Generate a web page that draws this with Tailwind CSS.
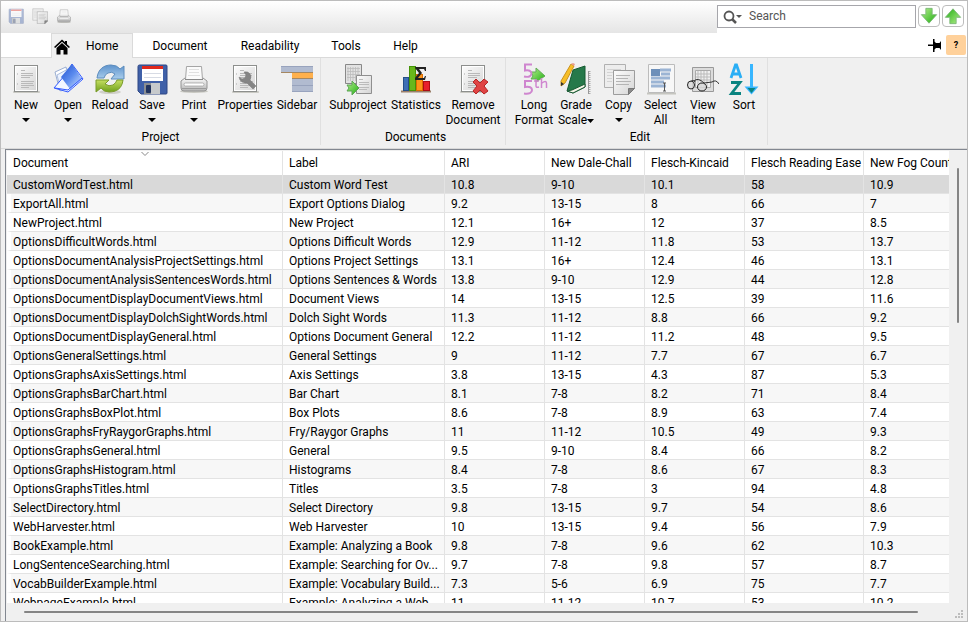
<!DOCTYPE html>
<html lang="en">
<head>
<meta charset="utf-8">
<title>Project</title>
<script src="https://cdn.jsdelivr.net/npm/@tailwindcss/browser@4"></script>
</head>
<body class="font-[Roboto,'Open_Sans',sans-serif] text-[12px] leading-[15px] text-black">
<svg class="absolute size-0" aria-hidden="true">
  <defs>
    <linearGradient id="gPage" x1="0" y1="0" x2="1" y2="1"><stop offset="0" stop-color="#fdfdfd"/><stop offset="1" stop-color="#d4d4d4"/></linearGradient>
    <linearGradient id="gBlue" x1="0" y1="0" x2="1" y2="1"><stop offset="0" stop-color="#1f4fd0"/><stop offset=".5" stop-color="#5c8cee"/><stop offset="1" stop-color="#d8e8ff"/></linearGradient>
    <linearGradient id="gGreen" x1="0" y1="0" x2="1" y2="1"><stop offset="0" stop-color="#b5ee8c"/><stop offset="1" stop-color="#1fae12"/></linearGradient>
    <linearGradient id="gPrint" x1="0" y1="0" x2="0" y2="1"><stop offset="0" stop-color="#fafafa"/><stop offset="1" stop-color="#b4b4b4"/></linearGradient>
    <linearGradient id="gSky" x1="0" y1="0" x2="0" y2="1"><stop offset="0" stop-color="#5e93cc"/><stop offset="1" stop-color="#a9cdec"/></linearGradient>
    <linearGradient id="gLime" x1="0" y1="0" x2="0" y2="1"><stop offset="0" stop-color="#c6df62"/><stop offset="1" stop-color="#6fa01c"/></linearGradient>
    <symbol id="page" viewBox="0 0 32 32">
      <rect x="3" y="28" width="27" height="2" rx="1" fill="#c9c9c3"/>
      <rect x="4.500" y="2.500" width="23" height="26" fill="url(#gPage)" stroke="#8d8f8d"/>
      <rect x="5.500" y="3.500" width="21" height="24" fill="none" stroke="#fff"/>
      <path d="M11 7.500h4M11 10.500h12M11 12.500h12M11 14.500h9M11 18.500h13M11 20.500h12M11 22.500h13M11 24.500h8" stroke="#b9b9b9"/>
      <path d="M7 11h1M7 21h1" stroke="#aaa"/>
    </symbol>
    <symbol id="floppy" viewBox="0 0 32 32">
      <path d="M2 3.500Q2 2 3.500 2H30q1 0 1 1v27q0 1-1 1H5l-3-3z" fill="#3f60a8" stroke="#2e4784"/>
      <rect x="6" y="3" width="21" height="15" fill="#fff"/>
      <rect x="6" y="3" width="21" height="3" fill="#e0281c"/>
      <path d="M8 10.500h17M8 14.500h17" stroke="#d7dbe4"/>
      <rect x="8" y="20" width="16" height="11" fill="#8b8e91"/>
      <rect x="15" y="20" width="9" height="11" fill="#c7cacc"/>
      <rect x="10" y="22" width="5" height="8" rx="1" fill="#22345f"/>
    </symbol>
    <symbol id="printer" viewBox="0 0 32 32">
      <ellipse cx="16" cy="28.500" rx="14" ry="1.500" fill="#c8c8c2"/>
      <path d="M7 15h18l4 3v7q0 3-3 3H6q-3 0-3-3v-7z" fill="url(#gPrint)" stroke="#949494"/>
      <path d="M8.500 3.500h15l1 13h-17z" fill="#fbfbfb" stroke="#a5a5a5"/>
      <path d="M11 6.500h10M11 9.500h10M10 12.500h12" stroke="#e0e0e0"/>
      <path d="M7 16.500h18" stroke="#888"/>
      <rect x="6" y="20" width="20" height="3" rx="1.500" fill="#fff" stroke="#999" stroke-width=".7"/>
      <path d="M4 25.500h24" stroke="#9b9b9b"/>
    </symbol>
    <symbol id="pages" viewBox="0 0 32 32">
      <path d="M1.500 1.500h21v23h-21z" fill="#ededed" stroke="#b0b0b0"/>
      <path d="M4 6.500h14M4 9.500h14M4 12.500h5M4 15.500h5M4 18.500h5" stroke="#d3d3d3"/>
      <path d="M10.500 7.500h21v18l-6 6h-15z" fill="url(#gPage)" stroke="#9c9c9c"/>
      <path d="M13 12.500h14M13 15.500h12M13 18.500h15M13 21.500h13" stroke="#b4b4b4"/>
      <path d="M25.500 31.500v-6h6z" fill="#8a8a8a" stroke="#777"/>
    </symbol>
    <symbol id="arrow" viewBox="0 0 20 20"><path d="M6.500 1.500h7v7h5L10 18 1.500 8.500h5z" fill="url(#gGreen)" stroke="#7ab877"/></symbol>
  </defs>
</svg>
<div class="flex h-screen flex-col overflow-hidden border border-[#bcbcbc] bg-[#f0f0f0]">
  <header class="flex h-8 shrink-0 bg-white">
    <div class="flex flex-1 items-start gap-2 bg-linear-to-b from-white to-[#e5e5e5] px-[7px] pt-[7px]">
      <button aria-label="Save" class="size-4 opacity-40"><svg class="size-4"><use href="#floppy"/></svg></button>
      <button aria-label="Copy" class="size-4"><svg class="size-4"><use href="#pages"/></svg></button>
      <button aria-label="Print" class="size-4"><svg class="size-4"><use href="#printer"/></svg></button>
    </div>
    <div class="flex items-start gap-[2px] pt-1 pr-[3px]">
      <label class="flex h-[23px] w-[199px] items-center border border-[#a6a6ab] pl-[5px]">
        <svg class="h-4 w-5 shrink-0" viewBox="0 0 20 16"><circle cx="6" cy="7" r="4.500" fill="none" stroke="#555" stroke-width="1.800"/><path d="M9 10l4 4" stroke="#555" stroke-width="2.500"/><path d="M13 6h6l-3 3z" fill="#555"/></svg>
        <input type="text" aria-label="Search" placeholder="Search" class="ml-[6px] w-0 flex-1 outline-none placeholder:text-[#555]">
      </label>
      <button aria-label="Find next" class="flex size-[22px] items-center justify-center rounded-[4px] border border-[#bdbdbd] bg-white"><svg class="size-[18px]"><use href="#arrow"/></svg></button>
      <button aria-label="Find previous" class="flex size-[22px] items-center justify-center rounded-[4px] border border-[#bdbdbd] bg-white"><svg class="size-[18px] rotate-180"><use href="#arrow"/></svg></button>
    </div>
  </header>

  <nav class="flex h-[25px] shrink-0 items-stretch border-b border-[#dadada] bg-white pl-[50px]">
    <a href="#home" class="-mb-px flex w-[82px] items-center border border-b-0 border-[#dadada] bg-[#f0f0f0] pt-px pl-[2px]">
      <svg class="size-4" viewBox="0 0 16 16"><path d="M0 8L8 .5 11 3.300V2h2v3.200L16 8l-1.200 1.100L8 2.800 1.200 9.100zM2.500 9L8 4l5.500 5v6.500h-4V11h-3v4.500h-4z" fill="#000"/></svg>
      <span class="ml-4">Home</span>
    </a>
    <a href="#document" class="flex w-[94px] items-center justify-center pt-[2px]">Document</a>
    <a href="#readability" class="flex w-[86px] items-center justify-center pt-[2px]">Readability</a>
    <a href="#tools" class="flex w-[66px] items-center justify-center pt-[2px]">Tools</a>
    <a href="#help" class="flex w-[53px] items-center justify-center pt-[2px]">Help</a>
    <span class="flex-1"></span>
    <button aria-label="Pin ribbon" class="mr-1 w-[14px]"><svg class="h-[14px] w-[14px]" viewBox="0 0 14 14"><path d="M0 6.500h5V1h1.500v2.500L8 5h3.500L13 3v9l-1.500-2H8l-1.500 1.500V14H5V8H0z" fill="#000"/></svg></button>
    <button aria-label="Help" class="mt-[2px] mr-[1px] h-[20px] w-[20px] rounded-[2px] bg-[#ffd19b] text-[9px] font-bold">?</button>
  </nav>

  <section aria-label="Ribbon" class="flex h-[91px] shrink-0 border-b border-[#d9d9d9] pb-[3px] text-center">
    <div class="flex w-[320px] flex-col border-r border-[#e0e0e0] pt-[5px]">
      <div class="flex flex-1 items-start pl-1">
        <button class="flex w-[42px] flex-col items-center"><svg class="mb-[3px] size-8"><use href="#page"/></svg>New<svg class="mt-1 h-[6px] w-2" viewBox="0 0 8 6"><path d="M0 1h8L4 5z"/></svg></button>
        <button class="flex w-[42px] flex-col items-center"><svg class="mb-[3px] size-8" viewBox="0 0 32 32"><path d="M3 9L14 4l4 18-10 6z" fill="#fff" stroke="#9aaed2"/><path d="M5 12L16 6l3 16-10 6z" fill="#eef4ff" stroke="#a9bbdc"/><path d="M20 1l11 15-15 13L2 25 13 12z" fill="#f2f7ff" stroke="#3159ff"/><path d="M20 1l10 15-12 10-9-12z" fill="url(#gBlue)"/><path d="M3 25l13 2 14-12" fill="none" stroke="#3159ff"/></svg>Open<svg class="mt-1 h-[6px] w-2" viewBox="0 0 8 6"><path d="M0 1h8L4 5z"/></svg></button>
        <button class="flex w-[42px] flex-col items-center"><svg class="mb-[3px] size-8" viewBox="0 0 32 32"><ellipse cx="16" cy="29" rx="11" ry="2" fill="#d0d0ca"/><path d="M3 15C4 6 10 2 17 2q6 0 9 4l4-3v13H17l4-5q-3-3-7-1-3 1-4 5z" fill="url(#gSky)" stroke="#5c8cbd"/><path d="M29 17c-1 9-7 12-14 12q-5 0-8-4l-5 4V17h13l-4 4q4 3 8 1 3-2 4-5z" fill="url(#gLime)" stroke="#7b9c2b"/></svg>Reload</button>
        <button class="flex w-[42px] flex-col items-center"><svg class="mb-[3px] size-8"><use href="#floppy"/></svg>Save<svg class="mt-1 h-[6px] w-2" viewBox="0 0 8 6"><path d="M0 1h8L4 5z"/></svg></button>
        <button class="flex w-[42px] flex-col items-center"><svg class="mb-[3px] size-8"><use href="#printer"/></svg>Print<svg class="mt-1 h-[6px] w-2" viewBox="0 0 8 6"><path d="M0 1h8L4 5z"/></svg></button>
        <button class="flex w-[60px] flex-col items-center"><svg class="mb-[3px] size-8" viewBox="0 0 32 32"><use href="#page"/><path d="M15 9q4-1 6 2 2 3 0 6l6 6-3 3-6-6q-4 1-7-3l-1-3 3 2 3-1 1-3z" fill="#858585" stroke="#777" stroke-width=".5"/></svg>Properties</button>
        <button class="flex w-[44px] flex-col items-center"><svg class="mb-[3px] size-8" viewBox="0 0 32 32"><path d="M0 3h32v7H0zM11 16h21v6H11zM11 23h21v6H11z" fill="#b1bbd0"/><path d="M11 10h21v6H11z" fill="#ffb04c"/><path d="M0 3.500h32M11 22.500h21M11 28.500h21" stroke="#98a3bd"/><path d="M0 9.500h32M11 15.500h21" stroke="#a58761"/></svg>Sidebar</button>
      </div>
      <div>Project</div>
    </div>
    <div class="flex w-[185px] flex-col border-r border-[#e0e0e0] pt-[5px] pl-[5px]">
      <div class="flex flex-1 items-start">
        <button class="flex w-[64px] flex-col items-center"><svg class="mb-[3px] size-8" viewBox="0 0 32 32"><path d="M3.500 1.500h16v19h-16z" fill="#e2e2e2" stroke="#888"/><path d="M6 4v14M8.500 4v14M11 4v14M13.500 4v14M16 4v14M5 5.500h13M5 8.500h13M5 11.500h13M5 14.500h13" stroke="#bbb" stroke-width=".8"/><path d="M14.500 12.500h15v18h-15z" fill="url(#gPage)" stroke="#8f8f8f"/><path d="M17 16.500h4M17 19.500h10M17 21.500h10M17 24.500h10M17 26.500h8" stroke="#bbb"/><path d="M5 22h5v-4l7 7-7 7v-4H5l2-3z" fill="url(#gGreen)" stroke="#5ca554"/></svg>Subproject</button>
        <button class="flex w-[52px] flex-col items-center"><svg class="mb-[3px] size-8" viewBox="0 0 32 32"><path d="M1 28.500h30" stroke="#9b806b" stroke-width="2"/><rect x="3.500" y="14.500" width="5" height="13" fill="#3e6fb5" stroke="#254e88"/><rect x="9.500" y="3.500" width="6" height="24" fill="#69b81c" stroke="#459308"/><rect x="16.500" y="11.500" width="6" height="16" fill="#ff941a" stroke="#d96c00"/><rect x="23.500" y="18.500" width="6" height="9" fill="#e8202c" stroke="#ad0c15"/><path d="M15 4h11v4h-1l-1-2h-5l3 4-4 5h6l1-2h1l-1 4H15v-2l4-5-4-5z" fill="#222"/></svg>Statistics</button>
        <button class="flex w-[62px] flex-col items-center"><svg class="mb-[3px] size-8" viewBox="0 0 32 32"><use href="#page"/><path d="M16 19l3-3 4 4 4-4 4 3-4 4 4 5-4 3-4-4-4 4-3-3 4-5z" fill="#df4444" stroke="#b52525"/></svg>Remove<br>Document</button>
      </div>
      <div>Documents</div>
    </div>
    <div class="flex w-[262px] flex-col border-r border-[#e0e0e0] pt-[5px] pl-[7px]">
      <div class="flex flex-1 items-start">
        <button class="flex w-[42px] flex-col items-center"><svg class="mb-[3px] size-8" viewBox="0 0 32 32"><path d="M13 9h5V5l9 8-9 6v-3h-5l2-3z" fill="url(#gGreen)" stroke="#62aa57"/><g fill="none" stroke="#cf86cf" stroke-width="2"><path d="M14 1.500H7v6q6-1 6.500 3Q13 15 6 13.500"/><path d="M14 18H7v6q7-1 7 3 0 4.500-8 3.500"/></g><path d="M18 16v7q0 2 3 1M16 18h5M23.500 15v10M24 20q4-3 4.500 0v5" fill="none" stroke="#cf86cf" stroke-width="1.500"/></svg>Long<br>Format</button>
        <button class="flex w-[42px] flex-col items-center"><svg class="mb-[3px] size-8" viewBox="0 0 32 32"><path d="M13 7l12-4v21l-12 6-6-2z" fill="#26794a" stroke="#155b30"/><path d="M7 28l5-1 13-6v3l-12 6z" fill="#f6f6e8" stroke="#195a34"/><path d="M29.500 8v23" stroke="#aaa" stroke-width="2" stroke-dasharray="1 1"/><path d="M28.500 8v23" stroke="#999"/><path d="M11 1l3 2L5 20l-4 3v-5z" fill="#f7be27" stroke="#c99320"/><path d="M11 1l3 2 1-2-2-1z" fill="#e99b8b"/><path d="M1 19v4l3-2z" fill="#333"/></svg>Grade<span class="flex items-center">Scale<svg class="h-[6px] w-[7px]" viewBox="0 0 7 6"><path d="M0 1h7L3.500 5z"/></svg></span></button>
        <button class="flex w-[43px] flex-col items-center"><svg class="mb-[3px] size-8"><use href="#pages"/></svg>Copy<svg class="mt-1 h-[6px] w-2" viewBox="0 0 8 6"><path d="M0 1h8L4 5z"/></svg></button>
        <button class="flex w-[41px] flex-col items-center"><svg class="mb-[3px] size-8" viewBox="0 0 32 32"><path d="M2 30.500h29" stroke="#c5c5bf" stroke-width="2"/><path d="M3.500 1.500h26v28h-26z" fill="#f7f7f7" stroke="#bcbcbc"/><path d="M6 6h9v7H6z" fill="#6d8fb9"/><path d="M15 7h11M16 11h9M6 15h19M6 19h13M6 23h15" stroke="#9bb4d4" stroke-width="3"/><path d="M18 20h3M19.500 20v8M18 28h3" stroke="#555"/></svg>Select<br>All</button>
        <button class="flex w-[44px] flex-col items-center"><svg class="mb-[3px] size-8" viewBox="0 0 32 32"><path d="M5.500 4.500h21v24h-21z" fill="#dcdcdc" stroke="#999"/><path d="M8.500 7.500h15v17h-15z" fill="#f0f0f0" stroke="#aaa"/><path d="M11 8v16M14 8v16M17 8v16M20 8v16M9 11h14M9 14h14M9 17h14" stroke="#bbb"/><path d="M7 18Q11 14 17 20l8-1q4-3 7 2M3 19q4-3 5 0" fill="none" stroke="#333"/><ellipse cx="4" cy="22" rx="3.500" ry="4" fill="#d9d9d9" fill-opacity=".8" stroke="#222"/><ellipse cx="15" cy="24" rx="4.500" ry="4" fill="#d9d9d9" fill-opacity=".8" stroke="#222"/></svg>View<br>Item</button>
        <button class="flex w-[38px] flex-col items-center"><svg class="mb-[3px] size-8" viewBox="0 0 32 32"><path d="M3 15L7.500 2h1L13 15M4.500 11h7" fill="none" stroke="#29aef5" stroke-width="2.800"/><path d="M3 19.500h9L3.500 30.500H13" fill="none" stroke="#0a8480" stroke-width="2.800"/><path d="M23.500 1v24" stroke="#38b6ff" stroke-width="3"/><path d="M16.500 23.500h14l-7 8z" fill="#38b6ff"/><path d="M19.500 25h8l-4 5z" fill="#0a8480"/></svg>Sort</button>
      </div>
      <div>Edit</div>
    </div>
  </section>

  <main class="ml-1 flex min-h-0 flex-1 flex-col border-t border-l border-[#828790] pt-px pl-px">
    <div class="flex min-h-0 flex-1">
      <div class="relative min-w-0 flex-1 overflow-hidden bg-white">
        <svg class="absolute top-0 left-[134px] h-[6px] w-2" viewBox="0 0 8 6" fill="none" stroke="#888"><path d="M0.500 1L4 4.500 7.500 1"/></svg>
        <table class="w-full table-fixed border-separate border-spacing-0 text-left">
          <colgroup><col class="w-[276px]"><col class="w-[162px]"><col class="w-[100px]"><col class="w-[100px]"><col class="w-[100px]"><col class="w-[119px]"><col></colgroup>
          <thead><tr id="head"></tr></thead>
          <tbody id="rows"></tbody>
        </table>
      </div>
      <div class="w-[18px] shrink-0 pt-[17px] pl-2"><div class="h-[155px] w-[2px] rounded-full bg-[#858585]"></div></div>
    </div>
    <div class="flex h-[18px] shrink-0 items-center justify-between pr-[3px] pl-[17px]">
      <div class="mr-[37px] h-[2px] flex-1 rounded-full bg-[#858585]"></div>
      <svg class="mt-1 h-[9px] w-[9px]" viewBox="0 0 9 9" fill="#bdbdbd"><path d="M6 0h2v2H6zM3 3h2v2H3zM6 3h2v2H6zM0 6h2v2H0zM3 6h2v2H3zM6 6h2v2H6z"/></svg>
    </div>
  </main>
</div>
<script>
const columns = ['Document','Label','ARI','New Dale-Chall','Flesch-Kincaid','Flesch Reading Ease','New Fog Count'];
const data = `CustomWordTest.html|Custom Word Test|10.8|9-10|10.1|58|10.9
ExportAll.html|Export Options Dialog|9.2|13-15|8|66|7
NewProject.html|New Project|12.1|16+|12|37|8.5
OptionsDifficultWords.html|Options Difficult Words|12.9|11-12|11.8|53|13.7
OptionsDocumentAnalysisProjectSettings.html|Options Project Settings|13.1|16+|12.4|46|13.1
OptionsDocumentAnalysisSentencesWords.html|Options Sentences & Words|13.8|9-10|12.9|44|12.8
OptionsDocumentDisplayDocumentViews.html|Document Views|14|13-15|12.5|39|11.6
OptionsDocumentDisplayDolchSightWords.html|Dolch Sight Words|11.3|11-12|8.8|66|9.2
OptionsDocumentDisplayGeneral.html|Options Document General|12.2|11-12|11.2|48|9.5
OptionsGeneralSettings.html|General Settings|9|11-12|7.7|67|6.7
OptionsGraphsAxisSettings.html|Axis Settings|3.8|13-15|4.3|87|5.3
OptionsGraphsBarChart.html|Bar Chart|8.1|7-8|8.2|71|8.4
OptionsGraphsBoxPlot.html|Box Plots|8.6|7-8|8.9|63|7.4
OptionsGraphsFryRaygorGraphs.html|Fry/Raygor Graphs|11|11-12|10.5|49|9.3
OptionsGraphsGeneral.html|General|9.5|9-10|8.4|66|8.2
OptionsGraphsHistogram.html|Histograms|8.4|7-8|8.6|67|8.3
OptionsGraphsTitles.html|Titles|3.5|7-8|3|94|4.8
SelectDirectory.html|Select Directory|9.8|13-15|9.7|54|8.6
WebHarvester.html|Web Harvester|10|13-15|9.4|56|7.9
BookExample.html|Example: Analyzing a Book|9.8|7-8|9.6|62|10.3
LongSentenceSearching.html|Example: Searching for Ov...|9.7|7-8|9.8|57|8.7
VocabBuilderExample.html|Example: Vocabulary Build...|7.3|5-6|6.9|75|7.7
WebpageExample.html|Example: Analyzing a Web...|11|11-12|10.7|53|10.2`.split('\n').map(r => r.split('|'));
const last = columns.length - 1;
for (const [i, name] of columns.entries()) {
  const th = document.createElement('th');
  th.className = i === last ? 'h-6 overflow-hidden pl-[6px] font-normal whitespace-nowrap' : 'h-6 overflow-hidden border-r border-[#e3e3e3] pl-[6px] font-normal whitespace-nowrap';
  th.textContent = name;
  head.append(th);
}
for (const [r, values] of data.entries()) {
  const tr = document.createElement('tr');
  tr.className = r === 0 ? 'bg-[#d9d9d9]' : r % 2 ? 'bg-[#f7f7f7]' : 'bg-white';
  for (const [i, v] of values.entries()) {
    const td = document.createElement('td');
    td.className = i === last
      ? 'h-[19px] overflow-hidden border-b border-[#e3e3e3] pt-[2px] pl-[6px] whitespace-nowrap'
      : i === 0 && r > 0
        ? 'h-[19px] overflow-hidden border-r border-b border-l-4 border-[#e3e3e3] border-l-white pt-[2px] pl-[2px] whitespace-nowrap'
        : 'h-[19px] overflow-hidden border-r border-b border-[#e3e3e3] pt-[2px] pl-[6px] whitespace-nowrap';
    td.textContent = v;
    tr.append(td);
  }
  rows.append(tr);
}
</script>
</body>
</html>
